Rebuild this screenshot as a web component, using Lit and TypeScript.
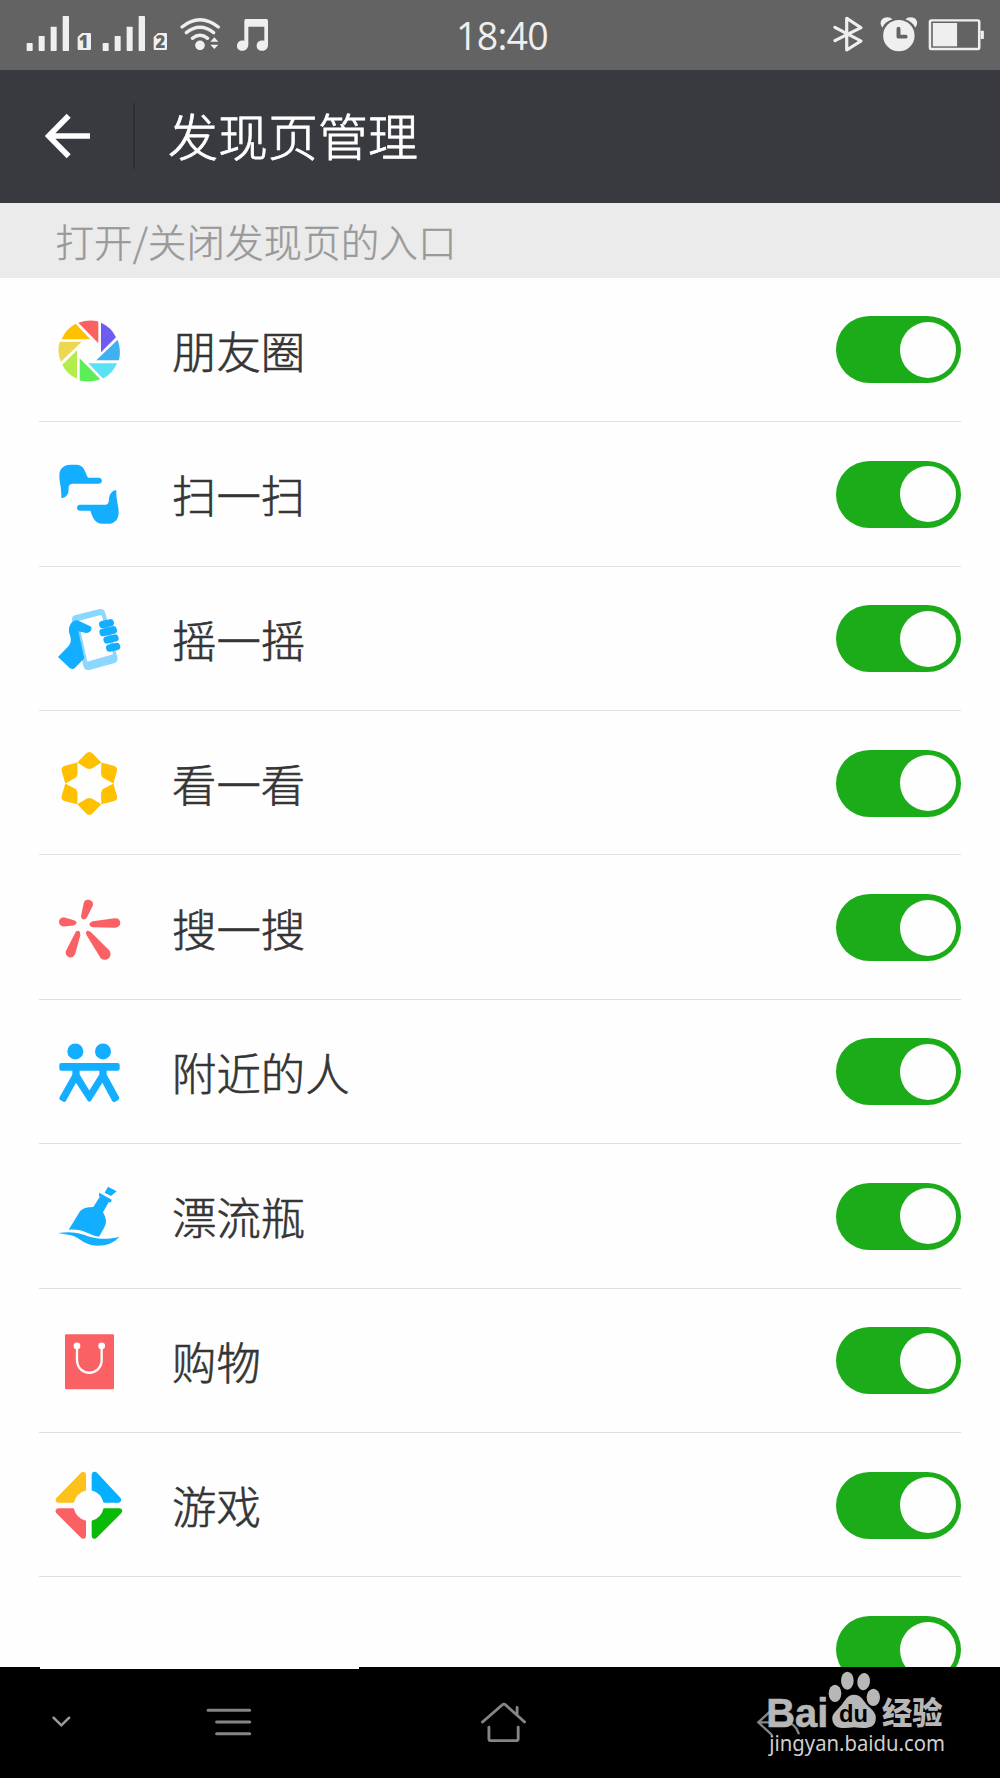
import { LitElement, html, svg, css, SVGTemplateResult } from "lit";
import { customElement, property } from "lit/decorators.js";

interface Entry {
  label: string;
  box: string;
  art: SVGTemplateResult;
}

const entries: Entry[] = [
  {
    label: "朋友圈",
    box: "69 71.4 216 216",
    art: svg`
      <path fill="#fa6262" d="M145 98Q176 86 205 94V159Z"/>
      <path fill="#6f5bf0" d="M213 98Q243 111 258 141L213 186Z"/>
      <path fill="#3fb0f0" d="M263 149Q274 180 267 210H199Z"/>
      <path fill="#58e2f2" d="M175 219H261Q248 250 219 265Z"/>
      <path fill="#5cee58" d="M149 204L211 267Q180 279 149 271Z"/>
      <path fill="#b3ed4c" d="M141 180V266Q110 253 97 224Z"/>
      <path fill="#eed750" d="M89 155H155L93 215Q80 186 89 155Z"/>
      <path fill="#ffc000" d="M95 147Q109 115 137 101L181 147Z"/>`,
  },
  {
    label: "扫一扫",
    box: "69 504.7 216 216",
    art: svg`<g fill="#13aeff">
      <path d="M94 624C95 595 88 578 88 558C88 537 101 525 120 525H138C163 525 164 546 174 564H206C219 564 219 582 206 582H128C108 584 121 600 113 613Q104 627 94 624Z"/>
      <path d="M259 602C258 631 266 648 266 668C266 689 253 702 235 702H217C194 702 187 681 181 663H150C138 663 138 645 150 645H227C242 643 233 626 241 613Q250 599 259 602Z"/></g>`,
  },
  {
    label: "摇一摇",
    box: "69 68 216 216",
    art: svg`
      <path fill="#8cd7ff" fill-rule="evenodd" d="M134 105L209 86Q221 84 225 95L262 230Q265 245 252 249L178 269Q165 271 161 260L126 123Q124 109 134 105ZM145 122L172 244L249 222L216 108Q215 104 209 105Z"/>
      <path fill="#13aeff" d="M84 230L115 198C128 183 121 169 117 156C115 138 123 121 142 120L181 138Q187 142 183 150Q179 158 168 158L145 153L163 234L134 264Q127 269 119 263Z"/>
      <g fill="#13aeff"><rect x="207" y="119" width="45" height="22" rx="10" transform="rotate(-13 230 130)"/><rect x="208" y="141" width="53" height="23" rx="10" transform="rotate(-13 235 152)"/><rect x="220" y="165" width="46" height="22" rx="10" transform="rotate(-13 243 176)"/><rect x="228" y="190" width="43" height="22" rx="10" transform="rotate(-13 249 201)"/></g>`,
  },
  {
    label: "看一看",
    box: "69 501.2 216 216",
    art: svg`<g fill="#ffc000">${[0, 60, 120, 180, 240, 300].map(
      (a) => svg`<path transform="rotate(${a} 178 610.5)" d="M142 548L168 521Q178 511 188 521L214 548L188 564Q178 570 168 564Z"/>`
    )}</g>`,
  },
  {
    label: "搜一搜",
    box: "69 64.5 216 216",
    art: svg`<g fill="#fa6164">
      <path d="M161 98Q164 86 177 88Q190 91 189 104L171 140Q168 147 159 147Q153 145 153 137Z"/>
      <path d="M101 140L132 149Q140 152 140 157Q138 163 130 165L101 168Q87 166 87 153Q89 141 101 140Z"/>
      <path d="M188 152L254 143Q270 142 271 157Q270 171 255 172L188 170Q179 168 178 162Q179 154 188 152Z"/>
      <path d="M135 188Q138 180 146 181Q152 184 151 194L136 249Q131 262 119 261Q106 257 107 243Z"/>
      <path d="M169 193Q166 185 171 181Q178 180 184 186L239 241Q245 253 237 263Q223 273 212 263Z"/></g>`,
  },
  {
    label: "附近的人",
    box: "69 497.7 216 216",
    art: svg`<g fill="#13aeff"><circle cx="136" cy="544" r="24"/><circle cx="219" cy="544" r="24"/>
      <path d="M94 579H263Q269 579 269 585V596Q269 602 263 602H230V613L267 681Q269 687 265 690L254 696Q249 697 246 692L217 638L183 692Q178 698 173 692L138 638L108 692Q105 697 100 695L90 689Q86 686 89 681L127 614V602H94Q88 602 88 596V585Q88 579 94 579ZM149 602V613L178 661L208 613V602Z"/></g>`,
  },
  {
    label: "漂流瓶",
    box: "69 61 216 216",
    art: svg`<g fill="#13aeff">
      <path d="M234 81L260 95L243 109L224 99Z"/>
      <path d="M208 99L245 120L243 128L236 128L219 158C230 177 231 190 222 205L207 231C190 230 172 218 150 212Q134 209 116 210L150 155Q160 142 190 142L209 112Q205 106 208 99Z"/>
      <path d="M84 220Q132 213 162 225C185 234 220 244 269 231Q244 258 203 258C160 258 151 233 123 227Q107 224 84 220Z"/></g>`,
  },
  {
    label: "购物",
    box: "69 494.3 216 216",
    art: svg`<rect x="105" y="522" width="147" height="165" rx="4" fill="#fa6164"/>
      <circle cx="141" cy="557" r="10" fill="#fff"/><circle cx="215" cy="557" r="10" fill="#fff"/>
      <path d="M141 560V600C143 650 213 650 215 600V560" fill="none" stroke="#fff" stroke-width="7"/>`,
  },
  {
    label: "游戏",
    box: "69 87.6 216 216",
    art: svg`
      <path fill="#fdc11b" d="M153 99Q159 94 165 98Q168 101 168 105V152Q141 158 131 189H85Q78 188 77 182Q76 178 80 174Z"/>
      <path fill="#04b0ff" d="M185 105Q185 98 192 96Q197 95 201 99L271 174Q275 178 273 183Q271 189 265 189H221Q212 158 185 152Z"/>
      <path fill="#fa6164" d="M85 205H131Q139 235 168 243V288Q168 295 162 297Q157 298 153 294L80 221Q75 216 77 211Q79 205 85 205Z"/>
      <path fill="#09bb07" d="M221 205H269Q276 206 277 213Q277 217 273 221L201 293Q196 298 191 297Q185 295 185 288V243Q213 235 221 205Z"/>`,
  },
];

@customElement("toggle-switch")
class ToggleSwitch extends LitElement {
  static styles = css`
    :host { display: block; flex: none; }
    .track { display: flex; justify-content: flex-end; align-items: center; box-sizing: border-box; width: 125px; height: 67px; padding-right: 5px; border-radius: 34px; background: #1cac1a; }
    .knob { width: 56px; height: 56px; border-radius: 50%; background: #fefefe; }
  `;
  render() {
    return html`<div class="track"><div class="knob"></div></div>`;
  }
}

@customElement("entry-row")
class EntryRow extends LitElement {
  @property({ attribute: false }) entry?: Entry;
  static styles = css`
    :host { display: block; flex: none; }
    .row { display: flex; align-items: center; box-sizing: border-box; height: 144.42px; margin: 0 39px; padding: 1px 0 0 14px; border-bottom: 1px solid #dfdfdf; }
    .icon { flex: none; width: 72px; height: 72px; }
    .label { flex: 1; margin-left: 47px; font-size: 44.4px; font-weight: 300; line-height: 64px; color: #353535; -webkit-text-stroke: 0.6px #353535; white-space: nowrap; }
    toggle-switch { margin-left: auto; }
  `;
  render() {
    const e = this.entry;
    return html`<div class="row">
      ${e
        ? html`<svg class="icon" viewBox=${e.box}>${e.art}</svg><span class="label">${e.label}</span>`
        : null}
      <toggle-switch></toggle-switch>
    </div>`;
  }
}

@customElement("app-root")
class AppRoot extends LitElement {
  static styles = css`
    :host { display: block; font-family: "Noto Sans CJK SC", "Noto Sans", sans-serif; }
    .screen { position: relative; display: flex; flex-direction: column; width: 1000px; height: 1778px; overflow: hidden; background: #fefefe; }
    svg { display: block; flex: none; }
    .status { display: flex; flex: none; height: 69.6px; background: #636363; }
    .time { align-self: center; width: 110px; text-align: center; margin: 0 auto 0 147px; font: 400 37.5px/56px "Open Sans", sans-serif; letter-spacing: -0.7px; color: #efefef; padding-top: 3px; }
    .head { display: flex; align-items: center; flex: none; height: 133.3px; padding-left: 45px; background: #393a3f; }
    .rule { width: 2px; height: 66px; margin-left: 43px; background: #2d2e32; }
    .title { margin: -4px 0 0 33px; font-size: 50px; font-weight: 300; line-height: 72px; color: #fff; -webkit-text-stroke: 0.8px #fff; }
    .hint { flex: none; display: flex; align-items: center; box-sizing: border-box; height: 74.8px; padding: 0 0 1px 55.5px; font-size: 38.6px; font-weight: 300; color: #999; -webkit-text-stroke: 0.4px #999; background: #ebebeb; }
    .list { flex: 1; min-height: 0; display: flex; flex-direction: column; overflow: hidden; }
    .nav { position: relative; display: flex; align-items: center; flex: none; height: 111px; background: #000; }
    .edge { position: absolute; left: 40px; top: 0; width: 319px; height: 2px; background: #fefefe; }
    .chevron { margin-left: 51.4px; }
    .menu { margin-left: 132.9px; }
    .home { margin-left: 227.1px; }
    .back { margin-left: 228.9px; }
    .mark { position: absolute; left: 730px; top: 1600px; }
  `;
  render() {
    return html`<div class="screen">
      <div class="status">
        <svg width="300" height="69" viewBox="0 0 900 207" fill="#efefef">
          ${[80, 308].map((x) => svg`<rect x=${x} y="129" width="18" height="24" rx="2"/><rect x=${x + 36} y="108" width="18" height="45" rx="2"/><rect x=${x + 72} y="80" width="18" height="73" rx="2"/><rect x=${x + 108} y="48" width="19" height="105" rx="2"/>`)}
          <path d="M246 99H270Q273 99 273 102V147Q273 150 270 150H236Q233 150 233 147V111Z"/>
          <path d="M474 99H498Q501 99 501 102V147Q501 150 498 150H464Q461 150 461 147V111Z"/>
          <g fill="#636363" font-family="Open Sans, sans-serif" font-weight="800" font-size="50" text-anchor="middle"><text x="251" y="143">1</text><text x="481" y="143">2</text></g>
          <g fill="none" stroke="#efefef" stroke-width="10" stroke-linecap="round"><path d="M546 81Q600 38 655 81M559 98Q600 66 641 98M577 115Q600 97 623 115"/></g>
          <circle cx="600" cy="136" r="14.5"/><path d="M631 125L643 112L655 125ZM631 134H655L643 147Z"/>
          <path d="M738 57H799Q804 57 804 62V135C804 158 770 158 770 137C770 124 782 119 793 122V80H745V135C743 158 711 157 711 139C711 124 722 120 733 122V62Q733 57 738 57Z"/>
        </svg>
        <div class="time">18:40</div>
        <svg width="174.3" height="69" viewBox="1080 0 488 207" preserveAspectRatio="none" fill="#efefef">
          <path d="M1105 82L1178 123L1138 150V55L1178 83L1105 122" fill="none" stroke="#efefef" stroke-width="9" stroke-linejoin="round" stroke-linecap="round"/>
          <path d="M1238 83C1226 67 1237 52 1252 52Q1261 52 1266 58Q1245 65 1238 83ZM1330 83C1342 67 1332 52 1317 52Q1307 52 1302 58Q1323 66 1330 83Z"/>
          <ellipse cx="1284" cy="107" rx="44" ry="47"/>
          <path d="M1283 86V110H1303" fill="none" stroke="#636363" stroke-width="11" stroke-linecap="round" stroke-linejoin="round"/>
          <rect x="1371" y="61" width="138" height="86" rx="4" fill="none" stroke="#efefef" stroke-width="7"/>
          <rect x="1379" y="69" width="68" height="70"/><rect x="1513" y="92" width="9" height="25" rx="2"/>
        </svg>
      </div>
      <div class="head">
        <svg width="45" height="46" viewBox="0 0 135 138" fill="none" stroke="#fff" stroke-width="17"><path d="M71 8L11 69L71 130M11 69H135"/></svg>
        <div class="rule"></div>
        <div class="title">发现页管理</div>
      </div>
      <div class="hint">打开/关闭发现页的入口</div>
      <div class="list">
        ${entries.map((e) => html`<entry-row .entry=${e}></entry-row>`)}
        <entry-row></entry-row>
      </div>
      <div class="nav">
        <div class="edge"></div>
        <svg class="chevron" width="21.4" height="45" viewBox="144 300 60 135" preserveAspectRatio="none" fill="none" stroke="#9b9b9b" stroke-width="7" stroke-linecap="round"><path d="M151 353L173 376L195 353"/></svg>
        <svg class="menu" width="47.2" height="45" viewBox="576 300 132 135" preserveAspectRatio="none" fill="none" stroke="#858585" stroke-width="9" stroke-linecap="round"><path d="M582 331H698M606 366H698M606 401H698"/></svg>
        <svg class="home" width="47.1" height="45" viewBox="1344 300 132 135" preserveAspectRatio="none" fill="none" stroke="#858585" stroke-width="8" stroke-linecap="round" stroke-linejoin="round"><path d="M1351 366L1406 315Q1411 310 1416 315L1469 366M1448 322V344M1369 381V416Q1369 422 1375 422H1445Q1451 422 1451 416V381"/></svg>
        <svg class="back" width="46" height="45" viewBox="78 300 138 135" fill="none" stroke="#858585" stroke-width="7" stroke-linecap="round"><path d="M124 331L85 367L124 403M85 367H165Q195 367 206 400"/></svg>
      </div>
      <svg class="mark" width="270" height="178" viewBox="0 0 810 534" fill="#b7b7b7">
        <text x="109" y="380" font-family="Liberation Sans, sans-serif" font-weight="700" font-size="122" textLength="186" lengthAdjust="spacingAndGlyphs" stroke="#b7b7b7" stroke-width="2">Bai</text>
        <ellipse cx="315" cy="280" rx="19" ry="26"/><ellipse cx="352" cy="242" rx="19" ry="27"/><ellipse cx="401" cy="245" rx="19" ry="26" transform="rotate(8 401 245)"/><ellipse cx="430" cy="292" rx="20" ry="26"/>
        <path d="M372 284C394 284 400 303 415 319C432 334 440 343 437 361C433 387 407 386 372 382C336 387 311 386 307 359C305 342 318 334 331 319C345 303 351 284 372 284Z"/>
        <text x="327" y="367" font-family="Liberation Sans, sans-serif" font-weight="700" font-size="72" textLength="87" lengthAdjust="spacingAndGlyphs" fill="#000">du</text>
        <text x="456" y="371" font-family="Noto Sans CJK SC, sans-serif" font-weight="900" font-size="92" textLength="182" lengthAdjust="spacingAndGlyphs">经验</text>
        <text x="118" y="453" font-family="Noto Sans, sans-serif" font-size="65" fill="#cfcfcf" textLength="527" lengthAdjust="spacingAndGlyphs">jingyan.baidu.com</text>
      </svg>
    </div>`;
  }
}
